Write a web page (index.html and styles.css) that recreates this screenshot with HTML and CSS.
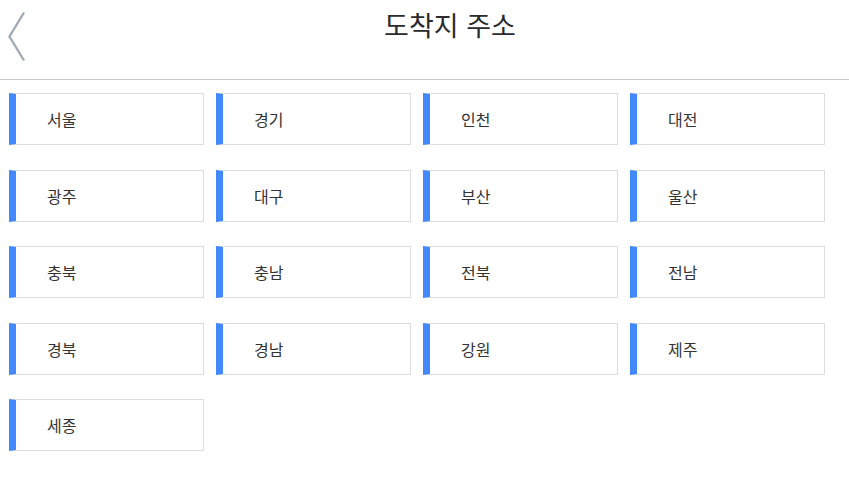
FILE: index.html
```html
<!DOCTYPE html>
<html lang="ko">
<head>
<meta charset="utf-8">
<link rel="stylesheet" href="styles.css">
</head>
<body>
<header class="header">
  <button class="back" aria-label="뒤로">
    <svg width="20" height="52" viewBox="0 0 20 52"><polyline points="17,1.5 2.5,25.5 17,49.5" fill="none" stroke="#a2a9b8" stroke-width="2.4"/></svg>
  </button>
  <h1 class="title">도착지 주소</h1>
</header>
<main class="grid">
  <div class="card">서울</div>
  <div class="card">경기</div>
  <div class="card">인천</div>
  <div class="card">대전</div>
  <div class="card">광주</div>
  <div class="card">대구</div>
  <div class="card">부산</div>
  <div class="card">울산</div>
  <div class="card">충북</div>
  <div class="card">충남</div>
  <div class="card">전북</div>
  <div class="card">전남</div>
  <div class="card">경북</div>
  <div class="card">경남</div>
  <div class="card">강원</div>
  <div class="card">제주</div>
  <div class="card">세종</div>
</main>
</body>
</html>
```
FILE: styles.css
```css
html, body {
  margin: 0;
  padding: 0;
  background: #fff;
  font-family: "Noto Sans CJK KR", "Noto Sans", sans-serif;
  color: #333;
}
.header {
  position: relative;
  height: 79px;
  border-bottom: 1px solid #c9c9c9;
  display: flex;
  justify-content: center;
}
.back {
  position: absolute;
  left: 7px;
  top: 11px;
  padding: 0;
  border: 0;
  background: none;
}
.back svg { display: block; }
.title {
  margin: 0;
  padding-left: 51px;
  font-size: 27px;
  font-weight: 400;
  line-height: 50px;
  color: #2b2b2b;
}
.grid {
  display: grid;
  grid-template-columns: repeat(4, 195px);
  column-gap: 12px;
  row-gap: 24.5px;
  padding: 13px 0 0 9px;
}
.card {
  border: 1px solid #dcdcdc;
  border-left: 7px solid #4289ff;
  box-sizing: border-box;
  height: 52px;
  padding-left: 31px;
  display: flex;
  align-items: center;
  font-size: 16px;
  color: #333;
}
```
